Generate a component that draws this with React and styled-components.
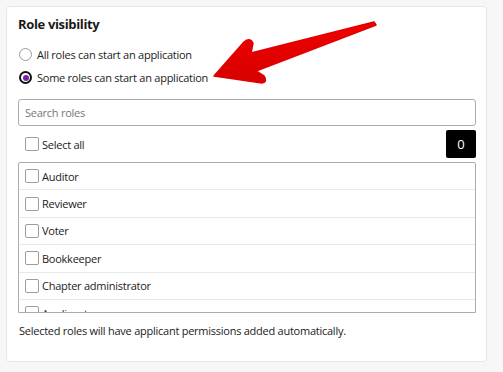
import React from 'react'
import styled, { createGlobalStyle } from 'styled-components'

const GlobalStyle = createGlobalStyle`
  html, body {
    margin: 0;
    padding: 0;
    background: #f7f7f7;
    font-family: "Open Sans", "Liberation Sans", sans-serif;
    color: #222;
  }
`;

const Page = styled.div`
  padding: 6px 16px 10px 6px;
  width: 503px;
  box-sizing: border-box;
`;

const Card = styled.div`
  position: relative;
  background: #fff;
  border: 1px solid #e6e6e6;
  border-radius: 4px;
  padding: 7px 10px 22px 11px;
  height: 356px;
  box-sizing: border-box;
`;

const Title = styled.h2`
  margin: 0;
  font-size: 13px;
  font-weight: 700;
  letter-spacing: -0.35px;
  line-height: 20px;
  color: #1a1a1a;
`;

const RadioGroup = styled.div`
  display: flex;
  flex-direction: column;
  margin-top: 9px;
`;

const RadioRow = styled.label`
  display: flex;
  align-items: center;
  gap: 5px;
  height: 23px;
  font-size: 11px;
  letter-spacing: -0.25px;
  color: #222;
  padding-left: 1px;
`;

const RadioDot = styled.span`
  width: 13px;
  height: 13px;
  box-sizing: border-box;
  border-radius: 50%;
  border: ${({ $checked }) => ($checked ? '2px solid #111' : '1px solid #9a9a9a')};
  background: #fff;
  display: flex;
  align-items: center;
  justify-content: center;
  &::after {
    content: '';
    display: ${({ $checked }) => ($checked ? 'block' : 'none')};
    width: 6px;
    height: 6px;
    border-radius: 50%;
    background: #7a1fa8;
  }
`;

const SearchInput = styled.input`
  display: block;
  margin-top: 10px;
  width: 100%;
  height: 27px;
  box-sizing: border-box;
  border: 1px solid #acacac;
  border-radius: 3px;
  padding: 0 6px;
  font-family: inherit;
  font-size: 11px;
  letter-spacing: -0.25px;
  outline: none;
  &::placeholder {
    color: #777;
  }
`;

const SelectAllRow = styled.div`
  display: flex;
  align-items: center;
  justify-content: space-between;
  margin-top: 4px;
  height: 28px;
  padding-left: 7px;
`;

const CheckLabel = styled.label`
  display: flex;
  align-items: center;
  gap: 3px;
  font-size: 11px;
  letter-spacing: -0.25px;
  color: #222;
`;

const Box = styled.span`
  width: 14px;
  height: 14px;
  box-sizing: border-box;
  border: 1px solid #9c9c9c;
  border-radius: 2px;
  background: #fff;
`;

const Count = styled.span`
  width: 30px;
  height: 28px;
  background: #000;
  color: #fff;
  border-radius: 2px;
  display: flex;
  align-items: center;
  justify-content: center;
  font-size: 13px;
`;

const RoleList = styled.div`
  margin-top: 4px;
  height: 151px;
  box-sizing: border-box;
  border: 1px solid #acacac;
  border-radius: 2px 2px 0 0;
  overflow: hidden;
`;

const RoleRow = styled.div`
  height: 27.4px;
  box-sizing: border-box;
  display: flex;
  align-items: center;
  padding-left: 6px;
  border-bottom: 1px solid #e9e9e9;
`;

const Note = styled.p`
  margin: 10px 0 0 1px;
  font-size: 11px;
  letter-spacing: -0.25px;
  line-height: 16px;
  color: #222;
`;

const Arrow = styled.svg`
  position: absolute;
  left: -7px;
  top: -7px;
  pointer-events: none;
`;

const roles = ['Auditor', 'Reviewer', 'Voter', 'Bookkeeper', 'Chapter administrator', 'Applicant'];

export default function App() {
  return (
    <>
      <GlobalStyle />
      <Page>
        <Card>
          <Title>Role visibility</Title>
          <RadioGroup>
            <RadioRow><RadioDot />All roles can start an application</RadioRow>
            <RadioRow><RadioDot $checked />Some roles can start an application</RadioRow>
          </RadioGroup>
          <SearchInput placeholder="Search roles" />
          <SelectAllRow>
            <CheckLabel><Box />Select all</CheckLabel>
            <Count>0</Count>
          </SelectAllRow>
          <RoleList>
            {roles.map((r) => (
              <RoleRow key={r}>
                <CheckLabel><Box />{r}</CheckLabel>
              </RoleRow>
            ))}
          </RoleList>
          <Note>Selected roles will have applicant permissions added automatically.</Note>
          <Arrow width="503" height="120" viewBox="0 0 503 120">
            <defs>
              <linearGradient id="ar" x1="0" y1="0" x2="0" y2="1">
                <stop offset="0" stopColor="#f20000" />
                <stop offset="1" stopColor="#d60000" />
              </linearGradient>
            </defs>
            <path
              d="M374 22 L376 25 L256 71 L264 76 Q268 82 262 83 L214 76 L244 42 Q250 37 253 43 L251 53 Z"
              fill="url(#ar)"
              stroke="#e00000"
              strokeWidth="1.5"
              strokeLinejoin="round"
            />
          </Arrow>
        </Card>
      </Page>
    </>
  );
}
